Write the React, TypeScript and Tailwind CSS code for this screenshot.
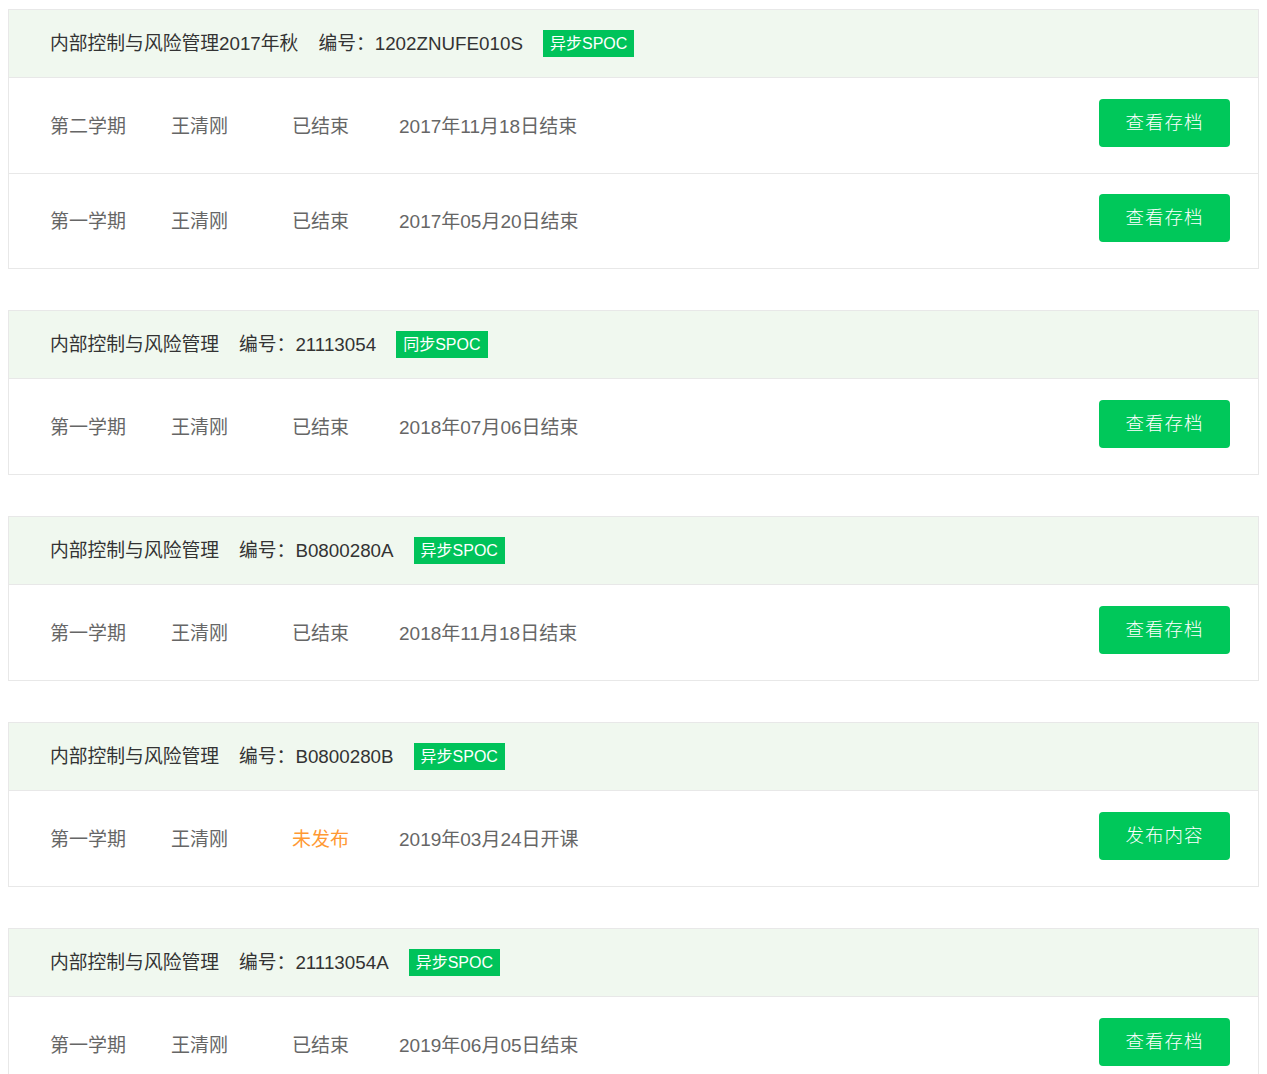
type Term = {
  term: string;
  teacher: string;
  status: string;
  published: boolean;
  date: string;
  action: string;
};

type Course = {
  title: string;
  code: string;
  badge: string;
  terms: Term[];
};

const courses: Course[] = [
  {
    title: "内部控制与风险管理2017年秋",
    code: "1202ZNUFE010S",
    badge: "异步SPOC",
    terms: [
      { term: "第二学期", teacher: "王清刚", status: "已结束", published: true, date: "2017年11月18日结束", action: "查看存档" },
      { term: "第一学期", teacher: "王清刚", status: "已结束", published: true, date: "2017年05月20日结束", action: "查看存档" },
    ],
  },
  {
    title: "内部控制与风险管理",
    code: "21113054",
    badge: "同步SPOC",
    terms: [
      { term: "第一学期", teacher: "王清刚", status: "已结束", published: true, date: "2018年07月06日结束", action: "查看存档" },
    ],
  },
  {
    title: "内部控制与风险管理",
    code: "B0800280A",
    badge: "异步SPOC",
    terms: [
      { term: "第一学期", teacher: "王清刚", status: "已结束", published: true, date: "2018年11月18日结束", action: "查看存档" },
    ],
  },
  {
    title: "内部控制与风险管理",
    code: "B0800280B",
    badge: "异步SPOC",
    terms: [
      { term: "第一学期", teacher: "王清刚", status: "未发布", published: false, date: "2019年03月24日开课", action: "发布内容" },
    ],
  },
  {
    title: "内部控制与风险管理",
    code: "21113054A",
    badge: "异步SPOC",
    terms: [
      { term: "第一学期", teacher: "王清刚", status: "已结束", published: true, date: "2019年06月05日结束", action: "查看存档" },
    ],
  },
];

export default function App() {
  return (
    <div className="min-h-screen bg-white px-2 pt-[9px] font-['Liberation_Sans','Noto_Sans_CJK_SC',sans-serif]">
      <div className="flex flex-col gap-[41px]">
        {courses.map((course) => (
          <div key={course.code} className="border border-[#e8e8e8]">
            <div className="flex h-[68px] items-center gap-5 border-b border-[#e8e8e8] bg-[#f0f8ef] pl-[41px] text-[18.8px] text-[#333]">
              <span className="mt-[2px]">{course.title}</span>
              <span className="mt-[2px]">编号：{course.code}</span>
              <span className="flex h-[27px] items-center bg-[#00c35a] px-[7px] text-[16px] text-white">
                {course.badge}
              </span>
            </div>
            {course.terms.map((t, i) => (
              <div
                key={t.date}
                className={`flex h-[95px] items-center pl-[41px] pr-[28px] text-[19px] text-[#666] ${
                  i > 0 ? "border-t border-[#e8e8e8]" : ""
                }`}
              >
                <span className="mt-[3px] w-[121px]">{t.term}</span>
                <span className="mt-[3px] w-[121px]">{t.teacher}</span>
                <span className={`mt-[3px] w-[107px] ${t.published ? "" : "text-[#ff9933]"}`}>{t.status}</span>
                <span className="mt-[3px] flex-1">{t.date}</span>
                <button
                  type="button"
                  className="mb-[6px] h-12 w-[131px] rounded-[4px] bg-[#00c85a] text-[18.5px] font-light tracking-[1px] text-white"
                >
                  {t.action}
                </button>
              </div>
            ))}
          </div>
        ))}
      </div>
    </div>
  );
}
